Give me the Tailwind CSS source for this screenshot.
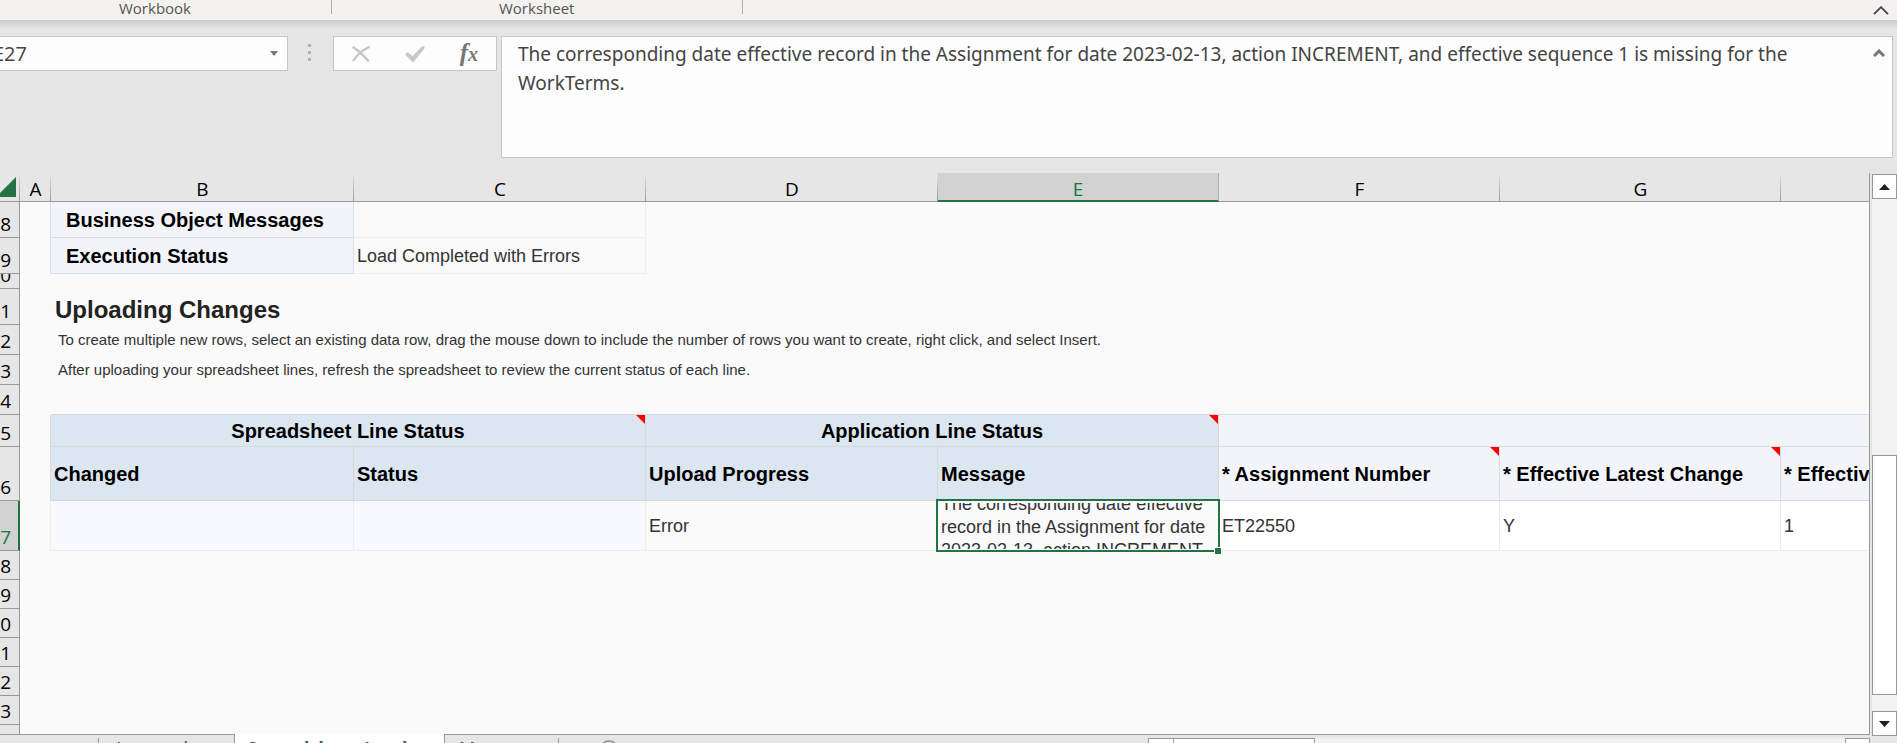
<!DOCTYPE html>
<html lang="en">

<head>
    <meta charset="UTF-8">
    <meta name="viewport" content="width=device-width, initial-scale=1.0">
    <title>Spreadsheet Load</title>
    <script src="https://cdn.jsdelivr.net/npm/@tailwindcss/browser@4"></script>
</head>

<body class="h-screen overflow-hidden flex flex-col bg-[#e6e6e6] font-['Open_Sans',sans-serif] text-black">

    <!-- Ribbon group labels -->
    <header class="h-5 shrink-0 flex items-start bg-[#f3f2f0] text-[15px] leading-4 text-[#555]">
        <div class="w-[332px] h-[14px] pl-[119px] border-r border-[#b3b1af]">Workbook</div>
        <div class="w-[411px] h-[14px] pl-[167px] border-r border-[#b3b1af]">Worksheet</div>
        <button type="button" aria-label="Collapse ribbon" class="ml-auto mr-2 mt-1.5">
            <svg class="w-4 h-[9px]" viewBox="0 0 16 9" fill="none" stroke="#444" stroke-width="1.8"><path d="M1 8.2 8 1.2l7 7" /></svg>
        </button>
    </header>

    <!-- Formula bar -->
    <section class="shrink-0 flex items-start pt-4 pb-[15px] text-[#444] bg-linear-to-b from-[#cccccb] to-[#e6e6e6] to-[9px]">
        <div class="relative w-[288px] h-[35px] border border-l-0 border-[#c6c6c6] bg-[#fdfdfd]">
            <input type="text" aria-label="Name box" value="E27" class="w-full h-full -indent-[7px] text-xl outline-none">
            <button type="button" aria-label="Show names" class="absolute right-2 top-3.5">
                <svg class="w-[10px] h-[5px]" viewBox="0 0 10 5" fill="#777"><path d="M1 0h8L5 5z" /></svg>
            </button>
        </div>
        <div class="w-[45px] pr-0.5 pt-[8px] flex flex-col items-center gap-1">
            <span class="size-[3px] bg-[#b0b0b0]"></span>
            <span class="size-[3px] bg-[#b0b0b0]"></span>
            <span class="size-[3px] bg-[#b0b0b0]"></span>
        </div>
        <div class="w-[164px] h-[35px] px-[18px] flex items-center justify-between border border-[#c6c6c6] bg-[#fdfdfd]">
            <button type="button" aria-label="Cancel">
                <svg class="w-[18px] h-4" viewBox="0 0 18 16" fill="none" stroke="#c6c6c6" stroke-linecap="round"><path d="M1.5 1.5c5 3 10 8 14.500 13" stroke-width="2.600" /><path d="M17 1C11 4 5 9 1.500 14.500" stroke-width="2.200" /></svg>
            </button>
            <button type="button" aria-label="Enter">
                <svg class="w-5 h-[17px]" viewBox="0 0 20 17" fill="#c8c8c8"><path d="M0 9.500 2.500 7l5 4L17.500 1l2 .5v2L8.500 17h-1z" /></svg>
            </button>
            <button type="button" aria-label="Insert function" class="font-['Liberation_Serif',serif] italic font-bold text-[25px] leading-6 text-[#777]">f<span class="text-xl">x</span></button>
        </div>
        <div class="relative flex-1 h-[122px] ml-1 mr-1 border border-[#c6c6c6] bg-[#fdfdfd]">
            <textarea aria-label="Formula" class="block w-full h-full pl-4 pr-14 pt-[3px] resize-none outline-none overflow-hidden font-['Noto_Sans',sans-serif] text-[19px] leading-[29px]">The corresponding date effective record in the Assignment for date 2023-02-13, action INCREMENT, and effective sequence 1 is missing for the WorkTerms.</textarea>
            <button type="button" aria-label="Scroll formula up" class="absolute right-[7px] top-3">
                <svg class="w-3 h-2" viewBox="0 0 12 8" fill="none" stroke="#777" stroke-width="3"><path d="M1 7l5-5 5 5" /></svg>
            </button>
        </div>
    </section>

    <main class="flex-1 min-h-0 flex">
        <div class="flex-1 min-w-0 flex flex-col">

            <!-- Sheet -->
            <div class="flex-1 min-h-0 overflow-hidden bg-[#fafafa] border-r border-[#999]">
                <table class="w-full table-fixed border-separate border-spacing-0 whitespace-nowrap text-left text-lg leading-6 text-[#333] font-['Liberation_Sans',sans-serif]">
                    <colgroup>
                        <col class="w-5">
                        <col class="w-[31px]">
                        <col class="w-[303px]">
                        <col class="w-[292px]">
                        <col class="w-[292px]">
                        <col class="w-[281px]">
                        <col class="w-[281px]">
                        <col class="w-[281px]">
                        <col>
                    </colgroup>
                    <thead class="font-['Open_Sans',sans-serif] text-[19px] leading-5 text-center text-black">
                        <tr class="h-[29px] bg-[#e6e6e6]">
                            <td class="p-0 align-top border-b border-[#999] bg-linear-to-b from-[#e6e6e6] to-[#999] bg-[length:1px_100%] bg-right bg-no-repeat">
                                <svg class="w-4 h-5 mt-1" viewBox="0 0 16 20"><path d="M16 0v20H-4z" fill="#217346" /></svg>
                            </td>
                            <th scope="col" class="p-0 pt-1 font-normal border-b border-[#999] bg-linear-to-b from-[#e6e6e6] to-[#999] bg-[length:1px_100%] bg-right bg-no-repeat">A</th>
                            <th scope="col" class="p-0 pt-1 font-normal border-b border-[#999] bg-linear-to-b from-[#e6e6e6] to-[#999] bg-[length:1px_100%] bg-right bg-no-repeat">B</th>
                            <th scope="col" class="p-0 pt-1 font-normal border-b border-[#999] bg-linear-to-b from-[#e6e6e6] to-[#999] bg-[length:1px_100%] bg-right bg-no-repeat">C</th>
                            <th scope="col" class="p-0 pt-1 font-normal border-b border-[#999] bg-linear-to-b from-[#e6e6e6] to-[#999] bg-[length:1px_100%] bg-right bg-no-repeat">D</th>
                            <th scope="col" class="p-0 pt-1 font-normal border-b-2 border-b-[#217346] border-r border-r-[#b0b0b0] bg-[#d2d2d2] text-[#217346]">E</th>
                            <th scope="col" class="p-0 pt-1 font-normal border-b border-[#999] bg-linear-to-b from-[#e6e6e6] to-[#999] bg-[length:1px_100%] bg-right bg-no-repeat">F</th>
                            <th scope="col" class="p-0 pt-1 font-normal border-b border-[#999] bg-linear-to-b from-[#e6e6e6] to-[#999] bg-[length:1px_100%] bg-right bg-no-repeat">G</th>
                            <th scope="col" class="p-0 border-b border-[#999]"></th>
                        </tr>
                    </thead>
                    <tbody>
                        <tr class="h-9">
                            <th scope="row" class="p-0 pr-2 align-bottom border-r border-b border-[#999] bg-[#e6e6e6] font-['Open_Sans',sans-serif] font-normal text-[19px] leading-[26px] text-right text-black">8</th>
                            <td class="p-0 border-r border-[#d6dfe8]"></td>
                            <td class="p-0 pl-[15px] border-r border-b border-[#d6dfe8] bg-[#f2f4f9] text-xl leading-6 font-bold text-black">Business Object Messages</td>
                            <td class="p-0 border-r border-b border-[#eee]"></td>
                            <td colspan="5" class="p-0"></td>
                        </tr>
                        <tr class="h-9">
                            <th scope="row" class="p-0 pr-2 align-bottom border-r border-b border-[#999] bg-[#e6e6e6] font-['Open_Sans',sans-serif] font-normal text-[19px] leading-[26px] text-right text-black">9</th>
                            <td class="p-0 border-r border-[#d6dfe8]"></td>
                            <td class="p-0 pl-[15px] border-r border-b border-[#d6dfe8] bg-[#f2f4f9] text-xl leading-6 font-bold text-black">Execution Status</td>
                            <td class="p-0 pl-[3px] border-r border-b border-[#eee]">Load Completed with Errors</td>
                            <td colspan="5" class="p-0"></td>
                        </tr>
                        <tr class="h-[15px]">
                            <th scope="row" class="p-0 pr-2 border-r border-b border-[#999] bg-[#e6e6e6] font-['Open_Sans',sans-serif] font-normal text-[19px] leading-[26px] text-black">
                                <div class="h-[14px] flex items-end justify-end overflow-hidden">0</div>
                            </th>
                            <td colspan="8" class="p-0"></td>
                        </tr>
                        <tr class="h-9">
                            <th scope="row" class="p-0 pr-2 align-bottom border-r border-b border-[#999] bg-[#e6e6e6] font-['Open_Sans',sans-serif] font-normal text-[19px] leading-[26px] text-right text-black">1</th>
                            <td class="p-0"></td>
                            <td colspan="7" class="p-0 pl-1 pt-1.5 text-2xl leading-7 font-bold text-[#222]">Uploading Changes</td>
                        </tr>
                        <tr class="h-[30px]">
                            <th scope="row" class="p-0 pr-2 align-bottom border-r border-b border-[#999] bg-[#e6e6e6] font-['Open_Sans',sans-serif] font-normal text-[19px] leading-[26px] text-right text-black">2</th>
                            <td class="p-0"></td>
                            <td colspan="7" class="p-0 pl-[7px] text-[15px] leading-6">To create multiple new rows, select an existing data row, drag the mouse down to include the number of rows you want to create, right click, and select Insert.</td>
                        </tr>
                        <tr class="h-[30px]">
                            <th scope="row" class="p-0 pr-2 align-bottom border-r border-b border-[#999] bg-[#e6e6e6] font-['Open_Sans',sans-serif] font-normal text-[19px] leading-[26px] text-right text-black">3</th>
                            <td class="p-0"></td>
                            <td colspan="7" class="p-0 pl-[7px] text-[15px] leading-6">After uploading your spreadsheet lines, refresh the spreadsheet to review the current status of each line.</td>
                        </tr>
                        <tr class="h-[30px]">
                            <th scope="row" class="p-0 pr-2 align-bottom border-r border-b border-[#999] bg-[#e6e6e6] font-['Open_Sans',sans-serif] font-normal text-[19px] leading-[26px] text-right text-black">4</th>
                            <td class="p-0"></td>
                            <td colspan="4" class="p-0 border-b border-[#d8d8d8]"></td>
                            <td colspan="3" class="p-0 border-b border-[#d3dfe8]"></td>
                        </tr>

                        <!-- Line status headings -->
                        <tr class="h-8 text-xl leading-6 font-bold text-black text-center">
                            <th scope="row" class="p-0 pr-2 align-bottom border-r border-b border-[#999] bg-[#e6e6e6] font-['Open_Sans',sans-serif] font-normal text-[19px] leading-[26px] text-right">5</th>
                            <td class="p-0 border-r border-[#d8d8d8]"></td>
                            <td colspan="2" class="relative p-0 border-r border-b border-[#d8d8d8] bg-[#dce6f0]">Spreadsheet Line Status
                                <svg class="absolute right-0 top-0 size-[9px]" viewBox="0 0 9 9"><path d="M0 0h9v9z" fill="#f00" /></svg>
                            </td>
                            <td colspan="2" class="relative p-0 border-r border-b border-[#d8d8d8] bg-[#dce6f0]">Application Line Status
                                <svg class="absolute right-0 top-0 size-[9px]" viewBox="0 0 9 9"><path d="M0 0h9v9z" fill="#f00" /></svg>
                            </td>
                            <td colspan="3" class="p-0 border-b border-[#d3dfe8] bg-[#f2f4f9]"></td>
                        </tr>
                        <tr class="h-[54px] text-xl leading-6 font-bold text-black">
                            <th scope="row" class="p-0 pr-2 align-bottom border-r border-b border-[#999] bg-[#e6e6e6] font-['Open_Sans',sans-serif] font-normal text-[19px] leading-[26px] text-right">6</th>
                            <td class="p-0 border-r border-[#d8d8d8]"></td>
                            <td class="p-0 pl-[3px] border-r border-b border-[#d8d8d8] bg-[#dce6f0]">Changed</td>
                            <td class="p-0 pl-[3px] border-r border-b border-[#d8d8d8] bg-[#dce6f0]">Status</td>
                            <td class="p-0 pl-[3px] border-r border-b border-[#d8d8d8] bg-[#dce6f0]">Upload Progress</td>
                            <td class="p-0 pl-[3px] border-r border-b border-[#d8d8d8] bg-[#dce6f0]">Message</td>
                            <td class="relative p-0 pl-[3px] border-r border-b border-[#d3dfe8] bg-[#f2f4f9]">* Assignment Number
                                <svg class="absolute right-0 top-0 size-[9px]" viewBox="0 0 9 9"><path d="M0 0h9v9z" fill="#f00" /></svg>
                            </td>
                            <td class="relative p-0 pl-[3px] border-r border-b border-[#d3dfe8] bg-[#f2f4f9]">* Effective Latest Change
                                <svg class="absolute right-0 top-0 size-[9px]" viewBox="0 0 9 9"><path d="M0 0h9v9z" fill="#f00" /></svg>
                            </td>
                            <td class="p-0 pl-[3px] border-b border-[#d3dfe8] bg-[#f2f4f9] overflow-hidden">* Effective Sequence</td>
                        </tr>
                        <tr class="h-[50px]">
                            <th scope="row" class="p-0 pr-[7px] align-bottom border-r-2 border-r-[#217346] border-b border-b-[#999] bg-[#d2d2d2] font-['Open_Sans',sans-serif] font-normal text-[19px] leading-[26px] text-right text-[#217346]">7</th>
                            <td class="p-0 border-r border-[#ececec]"></td>
                            <td class="p-0 border-r border-b border-[#ececec] bg-[#f8f9fe]"></td>
                            <td class="p-0 border-r border-b border-[#ececec] bg-[#f8f9fe]"></td>
                            <td class="p-0 pl-[3px] border-r border-b border-[#ececec]">Error</td>
                            <td class="relative p-0 border-r border-b border-[#ececec]">
                                <div class="h-[46px] pl-[3px] pr-1 pt-1 flex items-center overflow-hidden whitespace-normal leading-[23px]">
                                    <p class="shrink-0 w-full">The corresponding date effective record in the Assignment for date 2023-02-13, action INCREMENT,</p>
                                </div>
                                <span class="absolute -inset-0.5 border-2 border-[#217346]"></span>
                                <span class="absolute -right-[3px] -bottom-1 size-[7px] border-l border-t border-white bg-[#217346]"></span>
                            </td>
                            <td class="p-0 pl-[3px] border-r border-b border-[#ececec] bg-white">ET22550</td>
                            <td class="p-0 pl-[3px] border-r border-b border-[#ececec] bg-white">Y</td>
                            <td class="p-0 pl-[3px] border-b border-[#ececec] bg-white">1</td>
                        </tr>

                        <!-- Empty rows -->
                        <tr class="h-[29px]">
                            <th scope="row" class="p-0 pr-2 align-bottom border-r border-b border-[#999] bg-[#e6e6e6] font-['Open_Sans',sans-serif] font-normal text-[19px] leading-[26px] text-right text-black">8</th>
                            <td colspan="8" class="p-0"></td>
                        </tr>
                        <tr class="h-[29px]">
                            <th scope="row" class="p-0 pr-2 align-bottom border-r border-b border-[#999] bg-[#e6e6e6] font-['Open_Sans',sans-serif] font-normal text-[19px] leading-[26px] text-right text-black">9</th>
                            <td colspan="8" class="p-0"></td>
                        </tr>
                        <tr class="h-[29px]">
                            <th scope="row" class="p-0 pr-2 align-bottom border-r border-b border-[#999] bg-[#e6e6e6] font-['Open_Sans',sans-serif] font-normal text-[19px] leading-[26px] text-right text-black">0</th>
                            <td colspan="8" class="p-0"></td>
                        </tr>
                        <tr class="h-[29px]">
                            <th scope="row" class="p-0 pr-2 align-bottom border-r border-b border-[#999] bg-[#e6e6e6] font-['Open_Sans',sans-serif] font-normal text-[19px] leading-[26px] text-right text-black">1</th>
                            <td colspan="8" class="p-0"></td>
                        </tr>
                        <tr class="h-[29px]">
                            <th scope="row" class="p-0 pr-2 align-bottom border-r border-b border-[#999] bg-[#e6e6e6] font-['Open_Sans',sans-serif] font-normal text-[19px] leading-[26px] text-right text-black">2</th>
                            <td colspan="8" class="p-0"></td>
                        </tr>
                        <tr class="h-[29px]">
                            <th scope="row" class="p-0 pr-2 align-bottom border-r border-b border-[#999] bg-[#e6e6e6] font-['Open_Sans',sans-serif] font-normal text-[19px] leading-[26px] text-right text-black">3</th>
                            <td colspan="8" class="p-0"></td>
                        </tr>
                        <tr class="h-[29px]">
                            <th scope="row" class="p-0 pr-2 align-bottom border-r border-b border-[#999] bg-[#e6e6e6] font-['Open_Sans',sans-serif] font-normal text-[19px] leading-[26px] text-right text-black">4</th>
                            <td colspan="8" class="p-0"></td>
                        </tr>
                    </tbody>
                </table>
            </div>

            <!-- Sheet tabs and horizontal scrollbar -->
            <nav class="h-[9px] shrink-0 flex items-start overflow-hidden text-lg leading-6 text-[#444]">
                <div class="w-[235px] h-9 flex items-start border-t border-r border-[#999]">
                    <button type="button" class="ml-[98px] mt-[3px] pl-3.5 text-left border-l border-[#999] leading-5">Approval</button>
                </div>
                <button type="button" class="w-[209px] h-6 mt-px pt-px pl-3 text-left font-bold text-[#217346] bg-white shadow-[0_-1px_#fff]">Spreadsheet Load</button>
                <div class="flex-1 h-9 flex items-start border-t border-l border-[#999]">
                    <button type="button" class="w-[114px] mt-[3px] pl-3.5 text-left border-r border-[#999] leading-5">Messages</button>
                    <button type="button" aria-label="New sheet" class="ml-10 mt-[5px]">
                        <svg class="size-5" viewBox="0 0 20 20" fill="none" stroke="#888" stroke-width="1.500"><circle cx="10" cy="10" r="9" /><path d="M10 5v10M5 10h10" /></svg>
                    </button>
                    <div class="ml-auto mt-[3px] w-[722px] h-6 flex bg-[#f3f3f3]">
                        <button type="button" aria-label="Scroll left" class="w-[26px] border border-[#999] bg-white"></button>
                        <div class="w-[142px] -ml-px border border-[#999] bg-white"></div>
                        <button type="button" aria-label="Scroll right" class="ml-auto w-[25px] border border-[#999] bg-white"></button>
                    </div>
                </div>
            </nav>
        </div>

        <!-- Vertical scrollbar -->
        <aside class="ml-0.5 w-[25px] shrink-0 pt-px pb-[7px] flex flex-col">
            <button type="button" aria-label="Scroll up" class="h-[25px] shrink-0 flex items-center justify-center border border-[#999] bg-white">
                <svg class="w-[11px] h-1.5" viewBox="0 0 11 6" fill="#222"><path d="M5.500 0 11 6H0z" /></svg>
            </button>
            <div class="flex-1 pt-64 pb-4 flex bg-[#f3f3f3]">
                <div class="flex-1 border border-[#999] bg-white"></div>
            </div>
            <button type="button" aria-label="Scroll down" class="h-[25px] shrink-0 flex items-center justify-center border border-[#999] bg-white">
                <svg class="w-[11px] h-1.5" viewBox="0 0 11 6" fill="#222"><path d="M0 0h11L5.500 6z" /></svg>
            </button>
        </aside>
    </main>
</body>

</html>
